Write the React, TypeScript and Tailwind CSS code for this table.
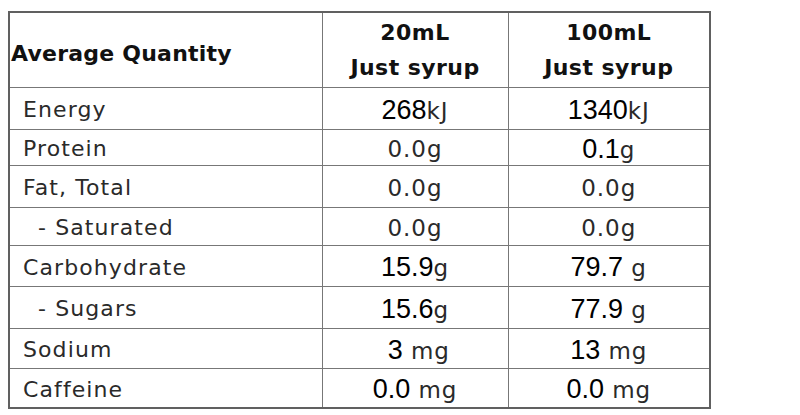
const gotham = "font-['DejaVu_Sans',sans-serif]";
const arial = "font-['Liberation_Sans',Arial,sans-serif]";

type Part = { t: string; a?: boolean };
type Row = { label: string; indent?: boolean; h: number; a: Part[]; b: Part[] };

const rows: Row[] = [
  { label: 'Energy', h: 42, a: [{ t: '268', a: true }, { t: 'kJ' }], b: [{ t: '1340', a: true }, { t: 'kJ' }] },
  { label: 'Protein', h: 36, a: [{ t: '0.0g' }], b: [{ t: '0.1', a: true }, { t: 'g' }] },
  { label: 'Fat, Total', h: 42, a: [{ t: '0.0g' }], b: [{ t: '0.0g' }] },
  { label: '- Saturated', indent: true, h: 38, a: [{ t: '0.0g' }], b: [{ t: '0.0g' }] },
  { label: 'Carbohydrate', h: 41, a: [{ t: '15.9', a: true }, { t: 'g' }], b: [{ t: '79.7', a: true }, { t: ' g' }] },
  { label: '- Sugars', indent: true, h: 42, a: [{ t: '15.6', a: true }, { t: 'g' }], b: [{ t: '77.9', a: true }, { t: ' g' }] },
  { label: 'Sodium', h: 40, a: [{ t: ' 3', a: true }, { t: ' mg' }], b: [{ t: '13', a: true }, { t: ' mg' }] },
  { label: 'Caffeine', h: 40, a: [{ t: '0.0', a: true }, { t: ' mg' }], b: [{ t: '0.0', a: true }, { t: ' mg' }] },
];

function Value({ parts }: { parts: Part[] }) {
  return (
    <span className="whitespace-pre">
      {parts.map((p, i) =>
        p.a ? (
          <span key={i} className={`${arial} text-[27px] text-black`}>{p.t}</span>
        ) : (
          <span key={i} className={`${gotham} text-[23px] text-[#2a2a2a] tracking-[0.04em]`}>{p.t}</span>
        )
      )}
    </span>
  );
}

export default function App() {
  return (
    <div className="w-[800px] h-[415px] bg-white pt-[11px] pl-[8px]">
      <table className="border-collapse border-2 border-[#606060] w-[701px] table-fixed">
        <colgroup>
          <col className="w-[313px]" />
          <col className="w-[186px]" />
          <col className="w-[202px]" />
        </colgroup>
        <thead>
          <tr className="h-[75px]">
            <th className={`${gotham} border border-[#777] text-left font-bold text-[22px] text-[#111] pl-[1px] pt-2 leading-none tracking-[0.01em]`}>
              Average Quantity
            </th>
            <th className={`${gotham} border border-[#777] font-bold text-[22px] text-[#111] leading-[35px] p-0 tracking-[0.02em]`}>
              20mL<br />Just syrup
            </th>
            <th className={`${gotham} border border-[#777] font-bold text-[22px] text-[#111] leading-[35px] p-0 tracking-[0.02em]`}>
              100mL<br />Just syrup
            </th>
          </tr>
        </thead>
        <tbody>
          {rows.map((r) => (
            <tr key={r.label} style={{ height: r.h }}>
              <td
                className={`${gotham} border border-[#777] text-[22px] text-[#2a2a2a] tracking-[0.05em] leading-none pt-1 ${r.indent ? 'pl-[28px]' : 'pl-[13px]'}`}
              >
                {r.label}
              </td>
              <td className="border border-[#777] text-center leading-none pt-1">
                <Value parts={r.a} />
              </td>
              <td className="border border-[#777] text-center leading-none pt-1">
                <Value parts={r.b} />
              </td>
            </tr>
          ))}
        </tbody>
      </table>
    </div>
  );
}
